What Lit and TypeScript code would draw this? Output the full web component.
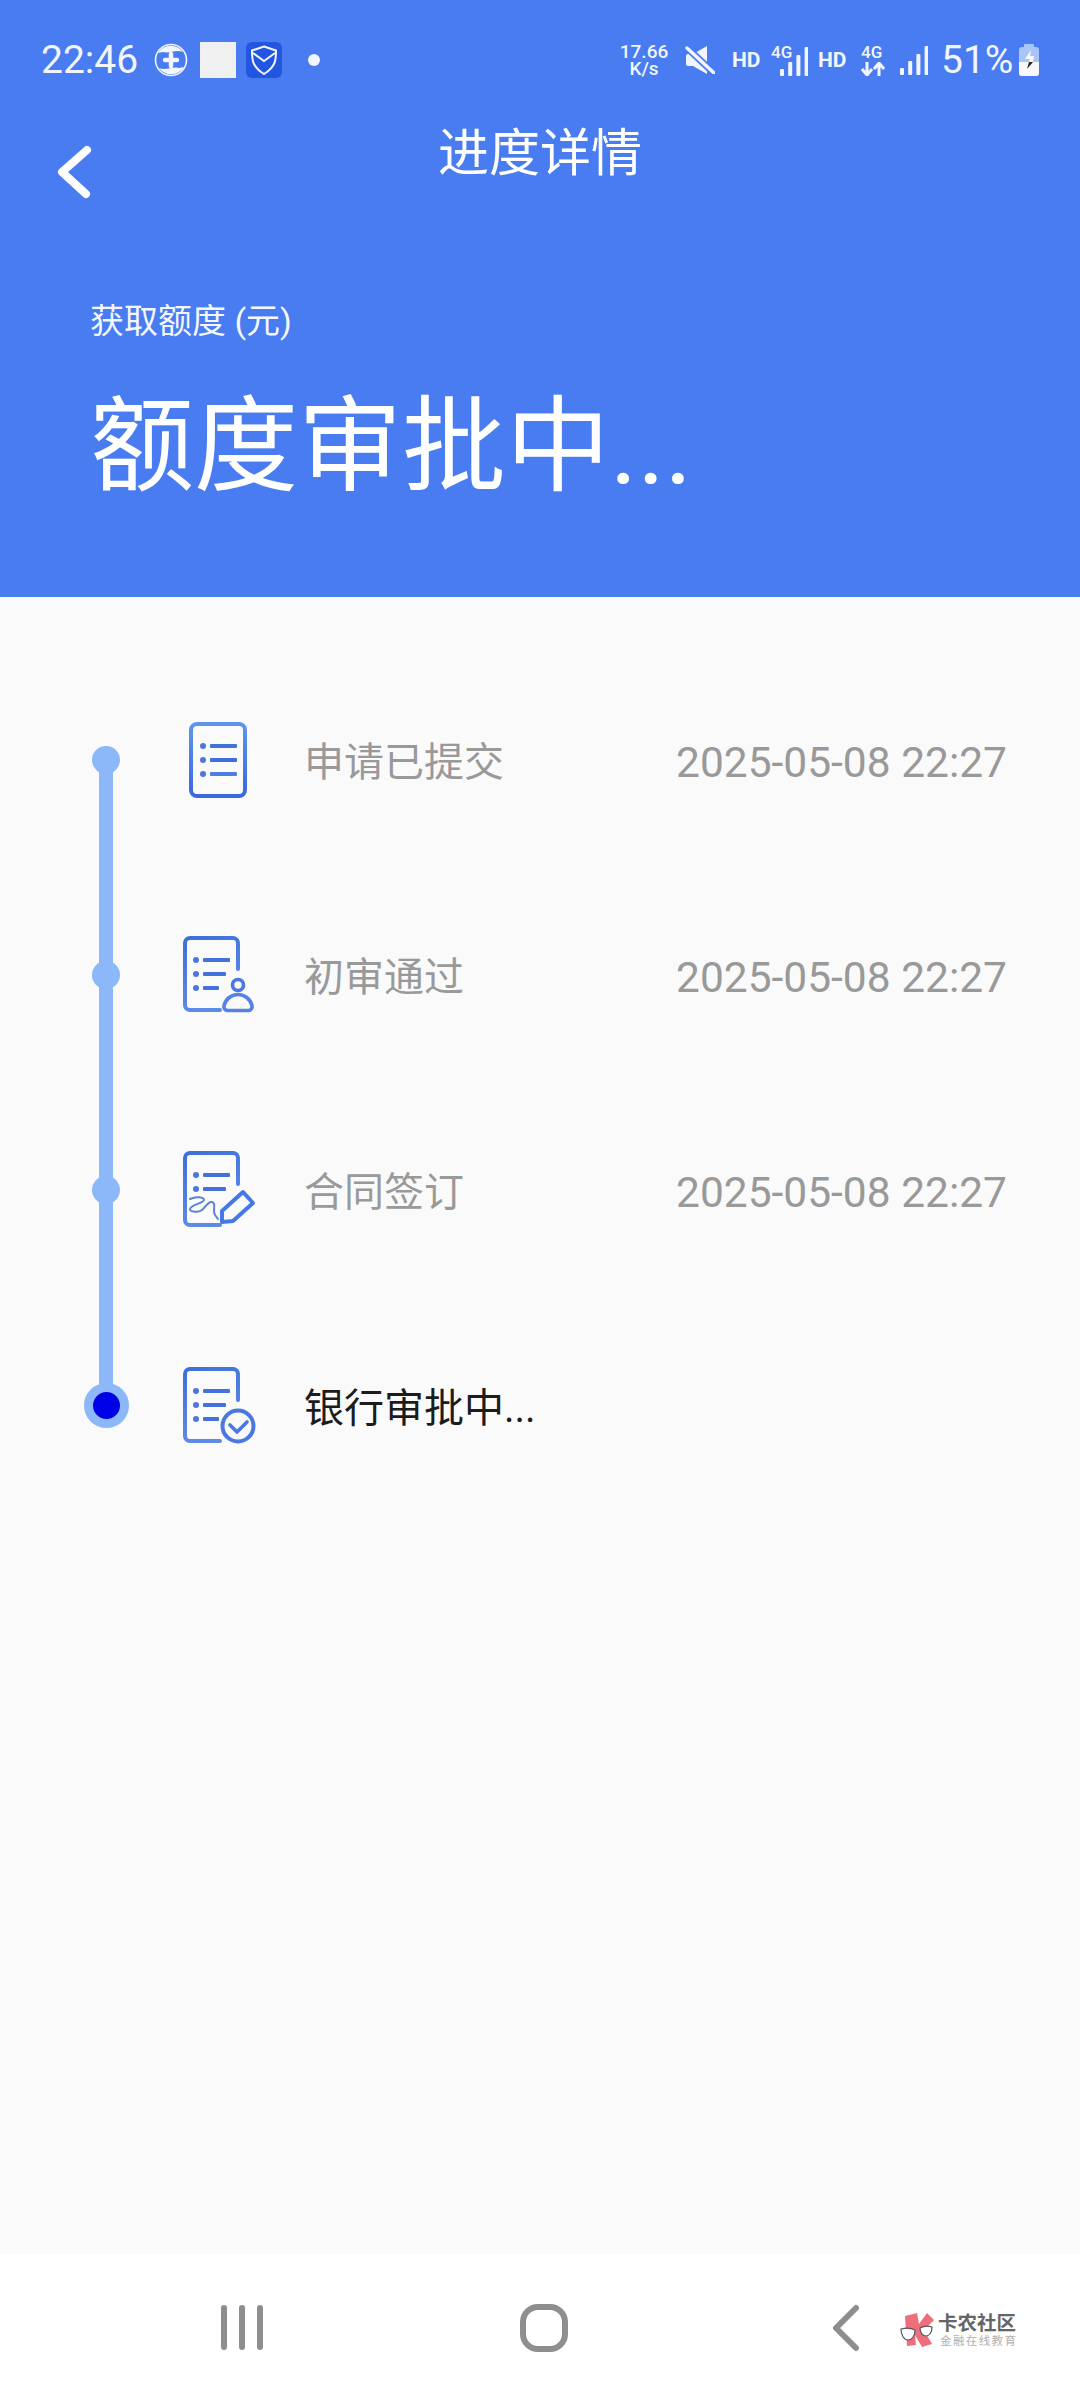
import { LitElement, html, css, svg } from "lit";
import { customElement } from "lit/decorators.js";

const grad = "url(#docGrad)";
const docOpen = svg`<path d="M55 33V7a5 5 0 0 0-5-5H7a5 5 0 0 0-5 5v62a5 5 0 0 0 5 5h30" fill="none" stroke="${grad}" stroke-width="4" stroke-linecap="round"/>`;
const bullets = (rows: number[]) =>
  rows.map((end, i) => svg`<circle cx="13" cy="${24 + i * 14}" r="3" fill="#4f76dc"/><rect x="20" y="${22 + i * 14}" width="${end - 20}" height="4" rx="1" fill="#4472dc"/>`);

const defs = svg`<defs><linearGradient id="docGrad" x1="0" y1="0" x2="0.3" y2="1"><stop offset="0" stop-color="#3f6fdc"/><stop offset="1" stop-color="#5d8ce8"/></linearGradient></defs>`;

const iconPlain = html`<svg class="ic" viewBox="0 0 72 78" width="72" height="78">
  <defs><linearGradient id="g1" x1="0" y1="0" x2="0" y2="1"><stop offset="0" stop-color="#5b95ec"/><stop offset="1" stop-color="#3a68de"/></linearGradient></defs>
  <rect x="8" y="3" width="54" height="72" rx="6" fill="none" stroke="url(#g1)" stroke-width="4"/>
  <circle cx="20" cy="25" r="3" fill="#4f76dc"/><rect x="27" y="23" width="27" height="4" rx="1" fill="#4472dc"/>
  <circle cx="20" cy="39" r="3" fill="#4f76dc"/><rect x="27" y="37" width="27" height="4" rx="1" fill="#3f6ddc"/>
  <circle cx="20" cy="53" r="3" fill="#4f76dc"/><rect x="27" y="51" width="27" height="4" rx="1" fill="#4f7de0"/>
</svg>`;

const iconUser = html`<svg class="ic" viewBox="0 0 72 78" width="72" height="78">${defs}
  ${docOpen}${bullets([47, 43, 36])}
  <circle cx="55" cy="49" r="5.5" fill="none" stroke="#4a78e0" stroke-width="3.6"/>
  <path d="M45 74.500a4 4 0 0 1-4-5c1.500-6 7-11 14-11s12.500 5 14 11a4 4 0 0 1-4 5z" fill="none" stroke="#5582e4" stroke-width="3.6"/>
</svg>`;

const iconSign = html`<svg class="ic" viewBox="0 0 72 78" width="72" height="78">${defs}
  ${docOpen}${bullets([47, 43])}
  <path d="M7 48c6-3 14-2 14 1 0 3-14 5-14 9 0 3 8 4 12 1 4-3 6-9 10-8 5 1 0 8 3 13l3 4" fill="none" stroke="#5a82d8" stroke-width="2" stroke-linecap="round"/>
  <path d="M39 60L60 41 70 52 50 70 39 71z" fill="none" stroke="#4478e6" stroke-width="4" stroke-linejoin="round"/>
</svg>`;

const iconCheck = html`<svg class="ic" viewBox="0 0 72 78" width="72" height="78">${defs}
  ${docOpen}${bullets([47, 43, 36])}
  <circle cx="55" cy="59" r="15.5" fill="#fafafa" stroke="#4a78e0" stroke-width="4"/>
  <path d="M47 58l7 7 10-10" fill="none" stroke="#4a78e0" stroke-width="3.6" stroke-linecap="round" stroke-linejoin="round"/>
</svg>`;

const signal = () => {
  const hs = [7, 14, 21, 29];
  return svg`${hs.map((h, i) => svg`<rect x="${i * 8.2}" y="${29 - h}" width="4" height="${h}" rx="1" fill="#f2f5fe"/>`)}`;
};

@customElement("app-root")
export class AppRoot extends LitElement {
  static styles = css`
    :host { display: block; width: 1080px; height: 2400px; background: #fafafa; font-family: Roboto, "Noto Sans CJK SC", sans-serif; }
    .page { display: flex; flex-direction: column; height: 2400px; }
    .head { background: #487cf0; height: 597px; flex: none; display: flex; flex-direction: column; color: #fff; }
    .status { height: 60px; margin-top: 30px; padding: 0 41px; display: flex; align-items: center; color: #f2f5fe; }
    .left { display: flex; align-items: center; }
    .clock { font-size: 39px; width: 111px; flex: none; }
    .white-sq { width: 36px; height: 36px; background: #f0f0f0; margin-left: 12px; }
    .shield { margin-left: 10px; display: block; }
    .ndot { width: 12px; height: 12px; border-radius: 50%; background: #f2f5fe; margin-left: 26px; }
    .right { margin-left: auto; display: flex; align-items: center; }
    .speed { width: 52px; display: flex; flex-direction: column; align-items: center; font-weight: 500; font-size: 19px; }
    .speed div { height: 17px; line-height: 17px; }
    .mute { margin-left: 15px; display: block; }
    .hd { font-size: 21px; font-weight: 700; line-height: 1; width: 26px; white-space: nowrap; }
    .hd.a { margin-left: 17px; }
    .hd.b { margin-left: 10px; }
    .g4 { position: relative; height: 32px; }
    .g4.a { margin-left: 13px; width: 37px; }
    .g4.b { margin-left: 17px; width: 24px; }
    .g4 span { position: absolute; left: 0; top: 0; font-size: 17px; font-weight: 500; line-height: 1; white-space: nowrap; }
    .sig-in { position: absolute; left: 9px; top: 3px; }
    .arrows { position: absolute; left: 0; top: 18px; }
    .sig { margin-left: 15px; display: block; }
    .pct { font-size: 39px; line-height: 1; margin-left: 13px; width: 72px; }
    .batt { margin-left: 6px; display: block; }
    .nav { height: 94px; position: relative; flex: none; display: flex; align-items: center; justify-content: center; }
    .title { font-size: 51px; line-height: 60px; margin-top: 33px; }
    .back { position: absolute; left: 56px; top: 53px; }
    .sub { font-size: 34px; line-height: 44px; margin: 0 0 0 90px; padding-top: 115px; color: #f4f7ff; }
    .big { font-size: 104px; line-height: 120px; margin: 45px 0 0 90px; font-weight: 400; }
    .tl { flex: 1; padding-top: 55px; }
    .row { height: 215.3px; display: grid; grid-template-columns: 183px 121px 1fr auto; align-items: center; padding-right: 73px; }
    .rail { position: relative; height: 100%; }
    .seg { position: absolute; left: 99px; top: 0; bottom: 0; width: 14px; background: #8cb8fa; }
    .row:first-child .seg { top: 50%; }
    .row:last-child .seg { bottom: 50%; }
    .dot { position: absolute; left: 92px; top: 50%; width: 28px; height: 28px; margin-top: -14px; border-radius: 50%; background: #8cb8fa; }
    .dot.now { left: 84px; width: 27px; height: 27px; margin-top: -22.5px; border: 9px solid #8cb8fa; background: #0000e6; }
    .ic { display: block; overflow: visible; }
    .lbl { font-size: 40px; color: #999; line-height: 48px; padding-top: 6px; }
    .lbl.now { color: #1c1c1c; }
    .time { font-size: 42.5px; color: #999; line-height: 48px; padding-top: 6px; }
    .bottom { height: 146px; flex: none; background: #fff; position: relative; display: flex; align-items: center; padding-top: 2px; box-sizing: border-box; }
    .bars { margin-left: 221px; display: block; }
    .home { margin-left: 257px; display: block; }
    .bk { margin-left: 262px; display: block; }
    .logo { position: absolute; left: 900px; top: 59px; display: flex; align-items: flex-start; gap: 3px; }
    .logo-txt { display: flex; flex-direction: column; }
    .l1 { font-size: 19.5px; line-height: 21px; color: #666; font-weight: 700; white-space: nowrap; }
    .l2 { font-size: 11.5px; line-height: 14px; color: #b0b0b0; white-space: nowrap; letter-spacing: 1.4px; margin-left: 2px; }
  `;

  render() {
    const rows = [
      { icon: iconPlain, label: "申请已提交", time: "2025-05-08 22:27" },
      { icon: iconUser, label: "初审通过", time: "2025-05-08 22:27" },
      { icon: iconSign, label: "合同签订", time: "2025-05-08 22:27" },
      { icon: iconCheck, label: "银行审批中...", time: "", now: true },
    ];
    return html`
      <div class="page">
        <div class="head">
          <div class="status">
            <div class="left">
              <span class="clock">22:46</span>
              <svg width="34" height="34" viewBox="0 0 34 34" style="margin-left:2px">
                <path d="M4 10A15 15 0 0 1 29 9C22 6 16 11 9 9zM30 24A15 15 0 0 1 5 25C12 28 18 23 25 25z" fill="#f2f5fe"/>
                <circle cx="17" cy="17" r="15.5" fill="none" stroke="#f2f5fe" stroke-width="1.6"/>
                <path d="M17 11v12M11 17h12" stroke="#f2f5fe" stroke-width="4.5" stroke-linecap="round"/>
              </svg>
              <div class="white-sq"></div>
              <svg class="shield" width="36" height="36" viewBox="0 0 36 36">
                <rect width="36" height="36" rx="6" fill="#2356e0"/>
                <path d="M18 4.500l12 4c0 9 0 16-12 23.500C6 24.500 6 17.500 6 8.500z" fill="none" stroke="#f2f5fe" stroke-width="2"/>
                <path d="M7 11l11 8 11-8" fill="none" stroke="#f2f5fe" stroke-width="2"/>
              </svg>
              <div class="ndot"></div>
            </div>
            <div class="right">
              <div class="speed"><div>17.66</div><div>K/s</div></div>
              <svg class="mute" width="30" height="28" viewBox="0 0 30 28">
                <path d="M1 10a2 2 0 0 1 2-2h5L22 0v28L8 20H3a2 2 0 0 1-2-2z" fill="#f2f5fe"/>
                <path d="M16 16L28 28H30V16z" fill="#487cf0"/>
                <path d="M1 1l28 26" stroke="#487cf0" stroke-width="7"/>
                <path d="M2 2l27 25" stroke="#f2f5fe" stroke-width="3.4" stroke-linecap="round"/>
              </svg>
              <span class="hd a">HD</span>
              <div class="g4 a">
                <span>4G</span>
                <svg class="sig-in" width="28" height="29" viewBox="0 0 28 29">${signal()}</svg>
              </div>
              <span class="hd b">HD</span>
              <div class="g4 b">
                <span>4G</span>
                <svg class="arrows" width="24" height="14" viewBox="0 0 24 14">
                  <path d="M6 0v12M1 7l5 6 5-6M18 14V2M13 7l5-6 5 6" fill="none" stroke="#f2f5fe" stroke-width="3"/>
                </svg>
              </div>
              <svg class="sig" width="28" height="29" viewBox="0 0 28 29">${signal()}</svg>
              <span class="pct">51%</span>
              <svg class="batt" width="20" height="32" viewBox="0 0 20 32">
                <rect x="5" y="0" width="10" height="4" rx="1" fill="#a9c4f7"/>
                <rect x="0" y="3" width="20" height="29" rx="3" fill="#a9c4f7"/>
                <path d="M0 18h20v11a3 3 0 0 1-3 3H3a3 3 0 0 1-3-3z" fill="#f8f8f8"/>
                <path d="M12 6L6 15h5l-1 3h4l1-6H11z" fill="#f8f8f8"/>
                <path d="M10 18h4l-6 7z" fill="#222"/>
              </svg>
            </div>
          </div>
          <div class="nav">
            <svg class="back" width="36" height="58" viewBox="0 0 36 58">
              <path d="M31 7L6 29l24 22" fill="none" stroke="#fff" stroke-width="8" stroke-linecap="round" stroke-linejoin="round"/>
            </svg>
            <span class="title">进度详情</span>
          </div>
          <div class="sub">获取额度 (元)</div>
          <div class="big">额度审批中...</div>
        </div>
        <div class="tl">
          ${rows.map(
            (r) => html`<div class="row">
              <div class="rail"><div class="seg"></div><div class="dot ${r.now ? "now" : ""}"></div></div>
              <div>${r.icon}</div>
              <div class="lbl ${r.now ? "now" : ""}">${r.label}</div>
              <div class="time">${r.time}</div>
            </div>`
          )}
        </div>
        <div class="bottom">
          <svg class="bars" width="42" height="46" viewBox="0 0 42 46">
            <rect x="0" y="0" width="6" height="45" rx="3" fill="#8e8e8e"/>
            <rect x="18" y="0" width="6" height="45" rx="3" fill="#8e8e8e"/>
            <rect x="36" y="0" width="6" height="45" rx="3" fill="#8e8e8e"/>
          </svg>
          <svg class="home" width="48" height="48" viewBox="0 0 48 48">
            <rect x="3" y="3" width="42" height="42" rx="15" fill="none" stroke="#8e8e8e" stroke-width="6"/>
          </svg>
          <svg class="bk" width="32" height="48" viewBox="0 0 32 48">
            <path d="M26 4L6 24l20 20" fill="none" stroke="#8e8e8e" stroke-width="6" stroke-linecap="round" stroke-linejoin="round"/>
          </svg>
          <div class="logo">
            <svg width="35" height="34" viewBox="0 0 35 34">
              <path d="M5 3L17 0l2 11L27 0l7 7-10 10 8 14-10 3-7-12 1 10-9 1z" fill="#ef6e7c"/>
              <path d="M1 16c4-1 10-1 14 1 0 6-3 10-7 10s-7-5-7-11zM20 15c4-2 9-2 12-1 0 6-3 9-6 9s-6-3-6-8z" fill="#fff" stroke="#555" stroke-width="1.2"/>
            </svg>
            <div class="logo-txt">
              <span class="l1">卡农社区</span>
              <span class="l2">金融在线教育</span>
            </div>
          </div>
        </div>
      </div>
    `;
  }
}
